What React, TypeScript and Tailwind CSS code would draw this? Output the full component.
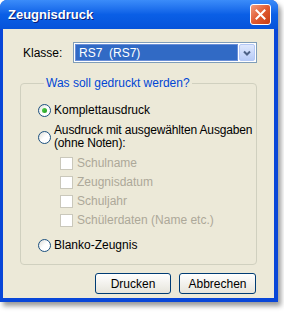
import { useState } from "react";

const Radio = ({ checked }: { checked: boolean }) => (
  <span className="flex h-[13px] w-[13px] shrink-0 items-center justify-center rounded-full border border-[#1c5180] bg-gradient-to-br from-[#dcdcd6] via-white to-white">
    {checked && (
      <span className="h-[5px] w-[5px] rounded-full bg-gradient-to-br from-[#55d451] to-[#1f9a1b]" />
    )}
  </span>
);

const Checkbox = ({ label }: { label: string }) => (
  <div className="flex items-center gap-[4px]">
    <span className="h-[13px] w-[13px] shrink-0 border border-[#cac8bb] bg-white" />
    <span className="leading-[13px] whitespace-nowrap text-[#aca899]">{label}</span>
  </div>
);

const App = () => {
  const [mode, setMode] = useState("komplett");

  return (
    <div
      className="h-[313px] w-[284px] bg-white text-[12px] text-black"
      style={{ fontFamily: '"Liberation Sans", Arial, sans-serif' }}
    >
      <div className="flex h-[302px] w-[278px] flex-col rounded-t-[7px] bg-[#0846d8] shadow-[3px_4px_5px_rgba(0,0,0,0.4)]">
        {/* title bar */}
        <div className="flex h-[29px] shrink-0 items-center justify-between rounded-t-[7px] bg-gradient-to-b from-[#3b8cf9] via-[#0a5fe6] to-[#0653da] pl-[8px] pr-[7px]">
          <span className="text-[13px] font-bold text-white [text-shadow:1px_1px_0_#0a1e78]">
            Zeugnisdruck
          </span>
          <button className="flex h-[21px] w-[21px] items-center justify-center rounded-[3px] border border-white bg-gradient-to-br from-[#f09a7c] via-[#e05a30] to-[#c63c12]">
            <svg width="11" height="11" viewBox="0 0 11 11">
              <path d="M1.5 1.5 L9.5 9.5 M9.5 1.5 L1.5 9.5" stroke="white" strokeWidth="2" strokeLinecap="square" />
            </svg>
          </button>
        </div>

        {/* body */}
        <div className="mb-[4px] ml-[3px] mr-[4px] flex flex-1 flex-col bg-[#ece9d8] px-[17px]">
          <div className="mt-[13px] flex h-[21px] items-center">
            <span className="w-[53px] pl-[3px]">Klasse:</span>
            <div className="flex h-[21px] flex-1 items-center border border-[#7f9db9] bg-white p-[1px]">
              <div className="flex h-full flex-1 items-center border border-[#6a8fd8] bg-[#316ac5] pl-[3px] text-white">
                RS7&nbsp;&nbsp;(RS7)
              </div>
              <div className="ml-[1px] flex h-full w-[16px] items-center justify-center rounded-[2px] border border-[#b4c8f6] bg-gradient-to-b from-[#dfe8fd] to-[#b7cbf7]">
                <svg width="8" height="6" viewBox="0 0 8 6">
                  <path d="M1 1.5 L4 4.5 L7 1.5" fill="none" stroke="#4d6185" strokeWidth="2" />
                </svg>
              </div>
            </div>
          </div>

          <fieldset className="mt-[13px] flex flex-col rounded-[4px] border border-[#d0d0bf] pb-[12px] pl-[17px]">
            <legend className="ml-[6px] px-[2px] leading-[14px] text-[#0046d5]">Was soll gedruckt werden?</legend>

            <div className="mt-[13px] flex items-center gap-[3px]" onClick={() => setMode("komplett")}>
              <Radio checked={mode === "komplett"} />
              <span className="leading-[14px]">Komplettausdruck</span>
            </div>

            <div className="mt-[7px] flex items-center gap-[3px]" onClick={() => setMode("auswahl")}>
              <Radio checked={mode === "auswahl"} />
              <span className="whitespace-nowrap leading-[13px] tracking-[-0.15px]">
                Ausdruck mit ausgewählten Ausgaben
                <br />
                (ohne Noten):
              </span>
            </div>

            <div className="ml-[22px] mt-[7px] flex flex-col gap-[6px]">
              <Checkbox label="Schulname" />
              <Checkbox label="Zeugnisdatum" />
              <Checkbox label="Schuljahr" />
              <Checkbox label="Schülerdaten (Name etc.)" />
            </div>

            <div className="mt-[11px] flex items-center gap-[3px]" onClick={() => setMode("blanko")}>
              <Radio checked={mode === "blanko"} />
              <span className="leading-[14px]">Blanko-Zeugnis</span>
            </div>
          </fieldset>

          <div className="mt-[8px] flex justify-end gap-[8px] pr-[1px]">
            <button className="h-[21px] w-[76px] rounded-[3px] border border-[#003c74] bg-gradient-to-b from-white to-[#e6e4db]">
              Drucken
            </button>
            <button className="h-[21px] w-[77px] rounded-[3px] border border-[#003c74] bg-gradient-to-b from-white to-[#e6e4db]">
              Abbrechen
            </button>
          </div>
        </div>
      </div>
    </div>
  );
};

export default App;
